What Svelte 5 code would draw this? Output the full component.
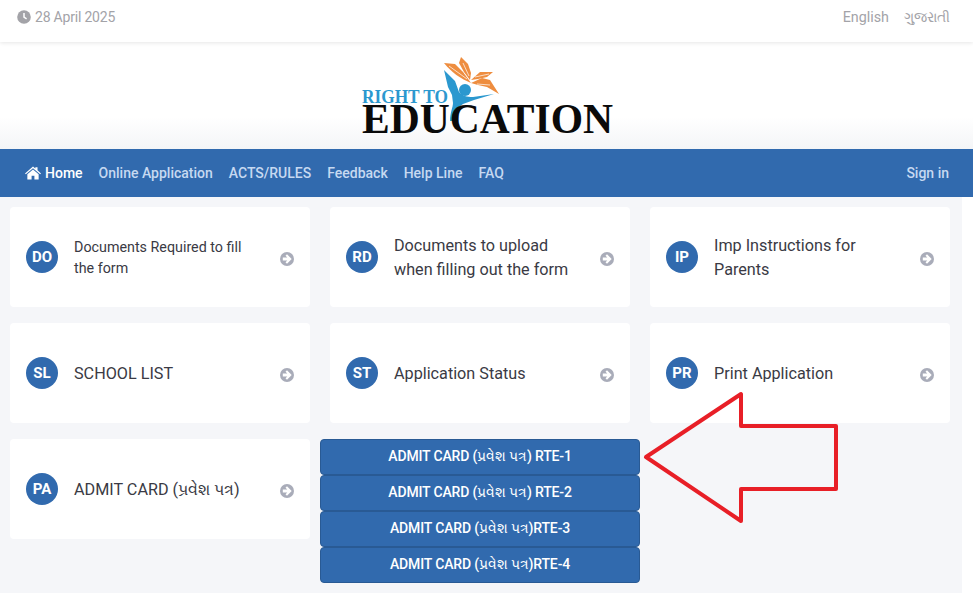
<script>
	const cards = [
		{ code: "DO", title: "Documents Required to fill the form", small: true },
		{ code: "RD", title: "Documents to upload when filling out the form" },
		{ code: "IP", title: "Imp Instructions for Parents" },
		{ code: "SL", title: "SCHOOL LIST" },
		{ code: "ST", title: "Application Status" },
		{ code: "PR", title: "Print Application" }
	];
	const links = ["Online Application", "ACTS/RULES", "Feedback", "Help Line", "FAQ"];
	const admits = [
		"ADMIT CARD (પ્રવેશ પત્ર) RTE-1",
		"ADMIT CARD (પ્રવેશ પત્ર) RTE-2",
		"ADMIT CARD (પ્રવેશ પત્ર)RTE-3",
		"ADMIT CARD (પ્રવેશ પત્ર)RTE-4"
	];
</script>

{#snippet chevron()}
	<svg class="go" viewBox="0 0 14 14" aria-hidden="true">
		<circle cx="7" cy="7" r="7" fill="#a9acb9" />
		<path d="M7 2.300 11.700 7 7 11.700 5.500 10.200 7.300 8.400H2.800V5.600H7.300L5.500 3.800Z" fill="#fff" />
	</svg>
{/snippet}

<div class="top">
	<div class="date">
		<svg viewBox="0 0 14 14" aria-hidden="true">
			<circle cx="7" cy="7" r="6.8" fill="#a3a3a8" />
			<path d="M7 3v4.200l2.600 1.600" fill="none" stroke="#fff" stroke-width="1.500" />
		</svg>
		28 April 2025
	</div>
	<div class="langs"><span>English</span><span>ગુજરાતી</span></div>
</div>

<div class="brand">
	<svg class="logo" viewBox="0 0 300 105" role="img" aria-label="Right to Education">
		<path d="M104 18 L115 19 L123 27 L131 38 C121 34 111 27 104 18Z" fill="#ee8d3f" />
		<path d="M121 12 L128 19 L131 28 L130 35 L124 27 L119 18Z" fill="#ee8d3f" />
		<path d="M131 35 L140 27 L153 27 L147 32 L138 34Z" fill="#ee8d3f" />
		<path d="M131 38 L142 33 L150 35 L159 49 L147 42 L138 40Z" fill="#ee8d3f" />
		<path d="M109 21 L127 34 M137 39 L150 40 M123 18 L129 31 M135 32 L149 29" fill="none" stroke="#fff" stroke-width="0.7" />
		<path d="M104 25 L115 36 L119 47 C122 51 127 52 133 52 L154 49 L134 55 L123 59 L115 65 L113 76 L110 76 C110 68 113 62 113 58 L112 50 L108 42Z" fill="#2b98cf" />
		<circle cx="125" cy="45" r="6" fill="#2b98cf" />
		<text class="rt" x="22" y="58" textLength="86" lengthAdjust="spacingAndGlyphs">RIGHT TO</text>
		<text class="ed" x="22" y="87.500" textLength="251" lengthAdjust="spacingAndGlyphs">EDUCATION</text>
	</svg>
</div>

<nav>
	<a href="/" class="home">
		<svg viewBox="0 0 17 14" aria-hidden="true">
			<path d="M8.500 0 11 2.200V1h2.300v3.200L17 7.400l-.9 1L8.500 2 .9 8.400 0 7.400Z M8.500 3.200 14.500 8.300V14H10V10H7v4H2.500V8.300Z" fill="#fff" />
		</svg>
		Home
	</a>
	{#each links as link}
		<a href="/">{link}</a>
	{/each}
	<a href="/" class="signin">Sign in</a>
</nav>

<main>
	<div class="grid">
		{#each cards as c}
			<div class="cell">
				<div class="card">
					<span class="badge">{c.code}</span>
					<span class="title" class:small={c.small}>{c.title}</span>
					{@render chevron()}
				</div>
			</div>
		{/each}
		<div class="cell">
			<div class="card">
				<span class="badge">PA</span>
				<span class="title">ADMIT CARD (પ્રવેશ પત્ર)</span>
				{@render chevron()}
			</div>
		</div>
		<div class="admits">
			{#each admits as a}
				<button>{a}</button>
			{/each}
		</div>
	</div>
	<svg class="arrow" viewBox="0 0 200 136" aria-hidden="true">
		<path d="M3 66 98 3V35H193V98H98V130Z" fill="none" stroke="#e81f27" stroke-width="4" stroke-linejoin="round" />
	</svg>
</main>

<style>
	:global(body) {
		background: #fff;
		font-family: Roboto, "Noto Sans", sans-serif;
	}
	.top {
		height: 42px;
		display: flex;
		justify-content: space-between;
		align-items: center;
		padding: 0 23px 8px 17px;
		box-sizing: border-box;
		font-size: 14px;
		letter-spacing: -0.2px;
		color: #a3a3a8;
		box-shadow: 0 1px 4px rgba(0, 0, 0, 0.1);
		position: relative;
	}
	.date {
		display: flex;
		align-items: center;
		gap: 4px;
	}
	.date svg {
		width: 14px;
		height: 14px;
	}
	.langs {
		display: flex;
		gap: 15px;
		font-size: 14.300px;
		letter-spacing: 0;
	}
	.brand {
		height: 107px;
		display: flex;
		justify-content: center;
		background: linear-gradient(#fff 70%, #f4f5f7);
	}
	.logo {
		width: 300px;
		height: 105px;
		margin-top: 3px;
		margin-left: 7px;
	}
	.rt {
		font: bold 19px "Liberation Serif", serif;
		fill: #2b98cf;
	}
	.ed {
		font: bold 43px "Liberation Serif", serif;
		fill: #0a0a0a;
	}
	nav {
		height: 48px;
		background: #316aae;
		display: flex;
		align-items: center;
		gap: 16px;
		padding: 0 24px 0 25px;
		font-size: 14px;
		font-weight: 500;
	}
	nav a {
		color: #c6d9f1;
		text-decoration: none;
	}
	nav .home {
		color: #fff;
		display: flex;
		align-items: center;
		gap: 4px;
	}
	.home svg {
		width: 16px;
		height: 14px;
	}
	nav .signin {
		margin-left: auto;
	}
	main {
		width: 962px;
		height: 396px;
		background: #f5f6f9;
		position: relative;
		overflow: hidden;
	}
	.grid {
		display: grid;
		grid-template-columns: repeat(3, 320px);
		padding-top: 10px;
	}
	.cell {
		padding: 0 10px 16px;
	}
	.card {
		height: 100px;
		background: #fff;
		border-radius: 4px;
		display: flex;
		align-items: center;
		padding: 0 16px;
		box-sizing: border-box;
		color: #3a3a44;
	}
	.badge {
		width: 32px;
		height: 32px;
		flex: none;
		border-radius: 50%;
		background: #316aae;
		color: #fff;
		font-size: 15px;
		font-weight: 700;
		display: flex;
		align-items: center;
		justify-content: center;
	}
	.title {
		flex: 1;
		margin: 2px 16px 0;
		font-size: 16.200px;
		line-height: 24px;
	}
	.title.small {
		font-size: 14.300px;
		line-height: 21px;
		padding-right: 16px;
	}
	.go {
		width: 14px;
		height: 14px;
		flex: none;
		margin-top: 4px;
	}
	.admits {
		display: flex;
		flex-direction: column;
	}
	button {
		height: 36px;
		width: 320px;
		border: 1px solid #295a94;
		border-radius: 4px;
		background: #316aae;
		color: #fff;
		font: 500 14px Roboto, "Noto Sans", sans-serif;
		letter-spacing: -0.15px;
		padding: 0 0 2px;
	}
	.arrow {
		position: absolute;
		left: 643px;
		top: 194px;
		width: 200px;
		height: 136px;
	}
</style>
